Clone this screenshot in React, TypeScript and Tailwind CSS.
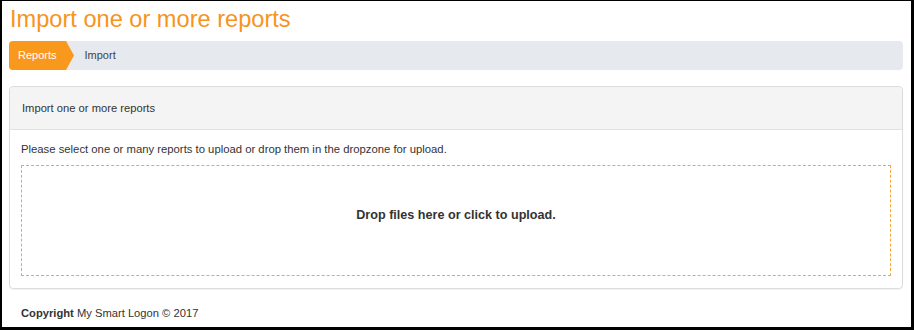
import React from 'react';

const Breadcrumb = () => {
  return (
    <div className="flex h-[29px] items-center rounded-[4px] bg-[#e6e9ed] text-[11px]">
      <div className="flex h-full items-center">
        <div className="flex h-full items-center rounded-l-[4px] bg-[#f8991d] pl-[9px] pr-[9px] text-white">Reports</div>
        <svg width="8" height="29" viewBox="0 0 8 29" className="block">
          <polygon points="0,0 8,14.5 0,29" fill="#f8991d" />
        </svg>
      </div>
      <div className="pl-[11px] text-[#444]">Import</div>
    </div>
  );
};

const App = () => {
  return (
    <div
      className="h-[330px] w-[914px] border-t border-l-2 border-r-[3px] border-b-[3px] border-black bg-white text-[#333]"
      style={{ fontFamily: '"Liberation Sans", Arial, sans-serif' }}
    >
      <div className="pl-[7px] pr-[8px]">
        <h1 className="mt-[5px] pl-px text-[23.6px] leading-[26px] text-[#f7941d]">Import one or more reports</h1>

        <div className="mt-[9px]">
          <Breadcrumb />
        </div>

        <div className="mt-[16px] rounded-[4px] border border-[#dcdcdc] shadow-[0_1px_1px_rgba(0,0,0,0.05)]">
          <div className="flex h-[43px] items-center rounded-t-[4px] border-b border-[#e2e2e2] bg-[#f4f4f4] pl-[12px] text-[11.2px]">
            Import one or more reports
          </div>
          <div className="px-[11px] pt-[11px] pb-[12px]">
            <p className="mb-[7px] text-[11.3px] leading-[17px]">
              Please select one or many reports to upload or drop them in the dropzone for upload.
            </p>
            <div className="flex h-[111px] cursor-pointer justify-center border border-dashed border-[#f7a43a] pt-[41px]">
              <span className="text-[12.6px] leading-[16px] font-bold text-[#333]">Drop files here or click to upload.</span>
            </div>
          </div>
        </div>

        <div className="mt-[16px] pl-[12px] text-[11.2px]">
          <span className="font-bold">Copyright</span> My Smart Logon © 2017
        </div>
      </div>
    </div>
  );
};

export default App;
